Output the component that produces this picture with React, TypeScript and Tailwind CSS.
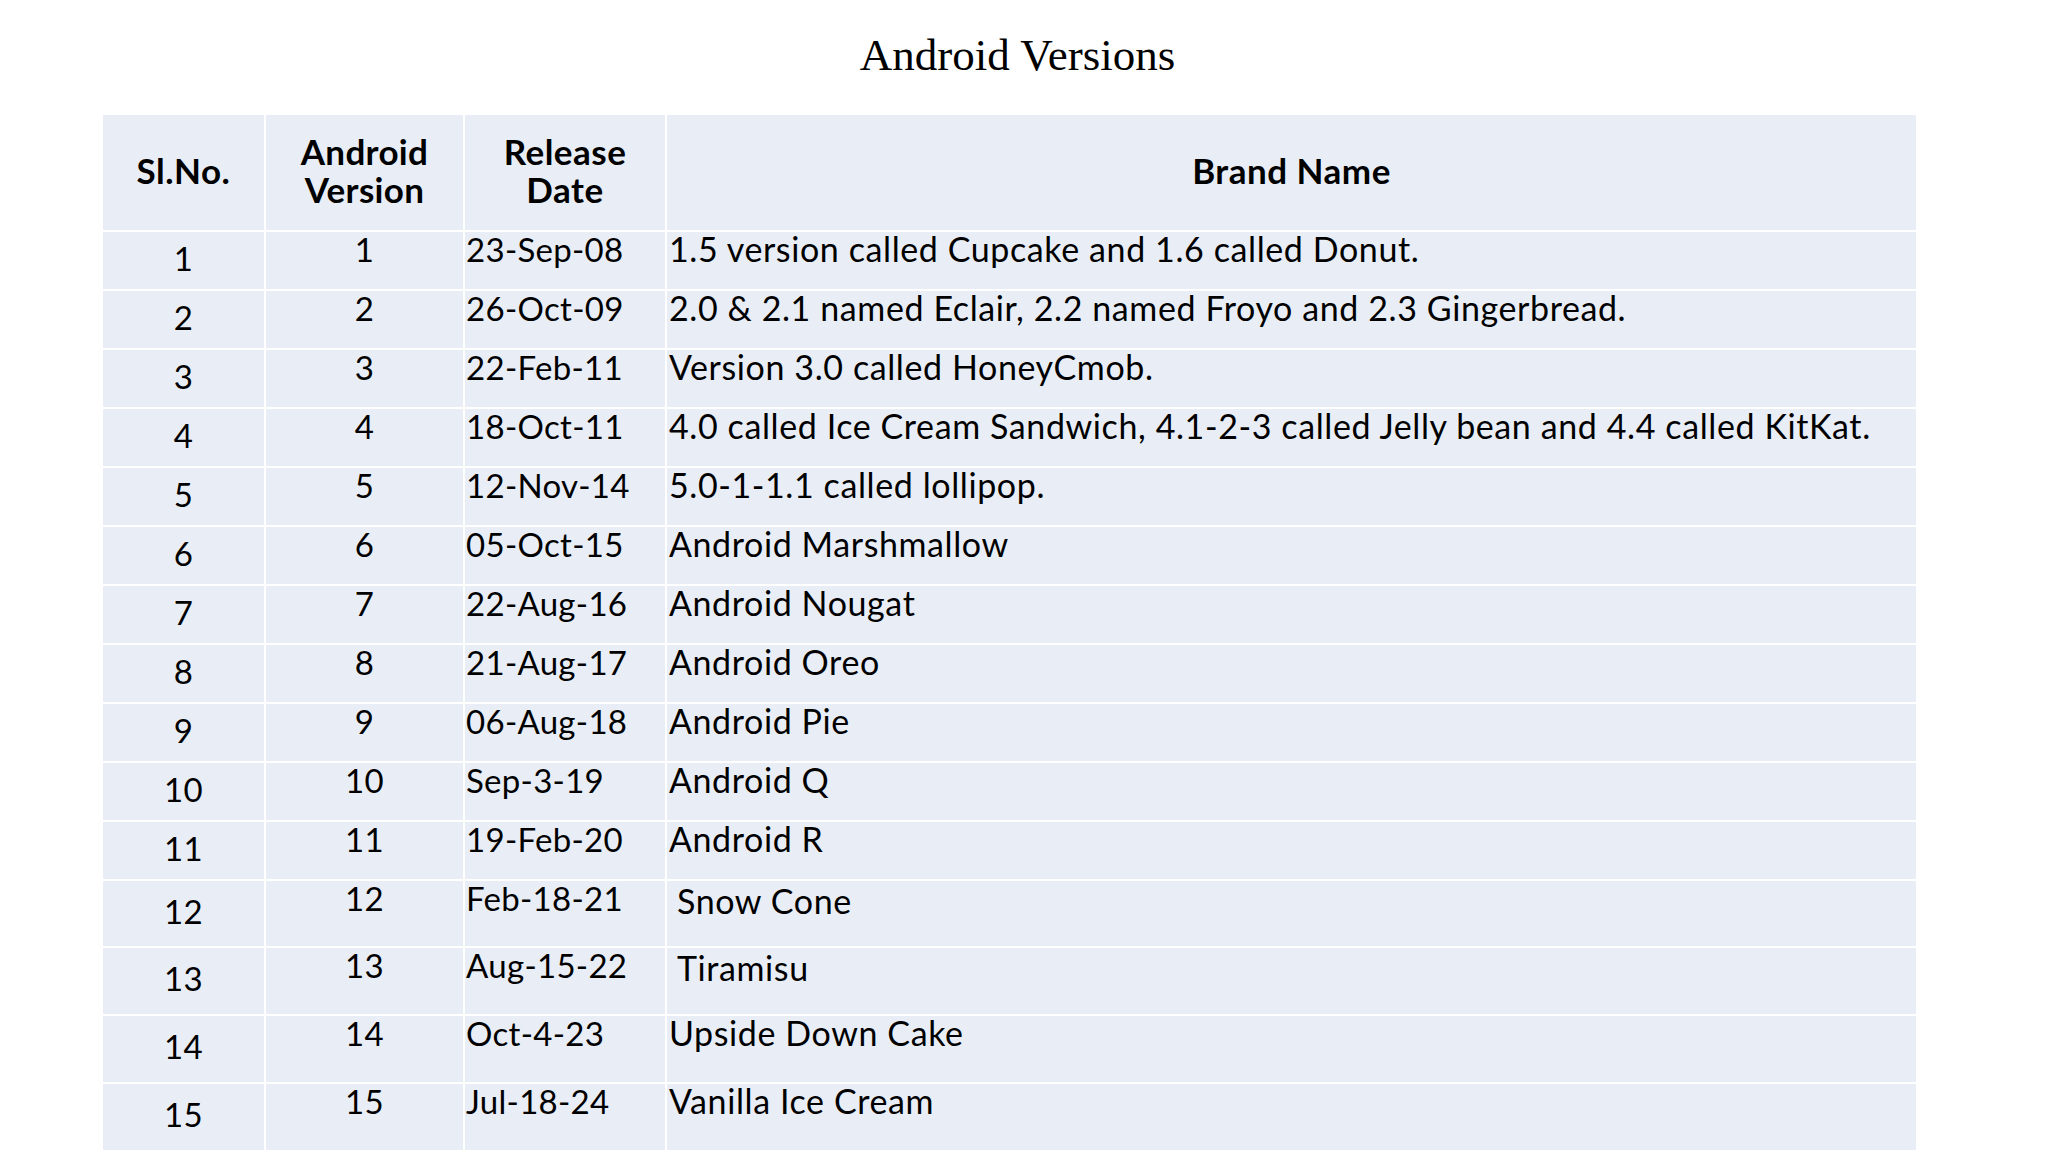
const rows = [
  { no: 1, ver: "1", date: "23-Sep-08", name: "1.5 version called Cupcake and 1.6 called Donut." },
  { no: 2, ver: "2", date: "26-Oct-09", name: "2.0 & 2.1 named Eclair, 2.2 named Froyo and 2.3 Gingerbread." },
  { no: 3, ver: "3", date: "22-Feb-11", name: "Version 3.0 called HoneyCmob." },
  { no: 4, ver: "4", date: "18-Oct-11", name: "4.0 called Ice Cream Sandwich, 4.1-2-3 called Jelly bean and 4.4 called KitKat." },
  { no: 5, ver: "5", date: "12-Nov-14", name: "5.0-1-1.1 called lollipop." },
  { no: 6, ver: "6", date: "05-Oct-15", name: "Android Marshmallow" },
  { no: 7, ver: "7", date: "22-Aug-16", name: "Android Nougat" },
  { no: 8, ver: "8", date: "21-Aug-17", name: "Android Oreo" },
  { no: 9, ver: "9", date: "06-Aug-18", name: "Android Pie" },
  { no: 10, ver: "10", date: "Sep-3-19", name: "Android Q" },
  { no: 11, ver: "11", date: "19-Feb-20", name: "Android R" },
  { no: 12, ver: "12", date: "Feb-18-21", name: "Snow Cone", indent: true },
  { no: 13, ver: "13", date: "Aug-15-22", name: "Tiramisu", indent: true },
  { no: 14, ver: "14", date: "Oct-4-23", name: "Upside Down Cake" },
  { no: 15, ver: "15", date: "Jul-18-24", name: "Vanilla Ice Cream" },
];

export default function App() {
  return (
    <div className="h-[1152px] w-[2048px] overflow-hidden bg-white text-black">
      {/* Title */}
      <div className="flex h-[115px] justify-center pt-[33px] pr-[13px]">
        <h1 className="text-[45px] leading-[44px] font-normal" style={{ fontFamily: '"Liberation Serif", "Times New Roman", serif' }}>
          Android Versions
        </h1>
      </div>

      {/* Table */}
      <div
        className="ml-[103px] grid w-[1813px] grid-cols-[161px_197px_200px_1249px] grid-rows-[115px_repeat(11,57px)_65px_repeat(3,66px)] gap-[2px] bg-white text-[33px] leading-[33px] tracking-[0.3px]"
        style={{ fontFamily: 'Lato, "Open Sans", sans-serif' }}
      >
        <div className="flex items-center justify-center bg-[#e9eef6] pb-[6px] text-[35px] font-bold leading-[38px] tracking-[0.5px]">Sl.No.</div>
        <div className="flex items-center justify-center bg-[#e9eef6] pb-[6px] text-center text-[35px] font-bold leading-[38px] tracking-[0.3px]">
          Android
          <br />
          Version
        </div>
        <div className="flex items-center justify-center bg-[#e9eef6] pb-[6px] text-center text-[35px] font-bold leading-[38px] tracking-[0.5px]">
          Release
          <br />
          Date
        </div>
        <div className="flex items-center justify-center bg-[#e9eef6] pb-[6px] text-[35px] font-bold leading-[38px] tracking-[0.5px]">Brand Name</div>

        {rows.map((r) => (
          <div key={r.no} className="contents">
            <div className="flex items-center justify-center bg-[#e9eef6] pb-[5px]">{r.no}</div>
            <div className="bg-[#e9eef6] pt-[1px] text-center">{r.ver}</div>
            <div className="whitespace-nowrap bg-[#e9eef6] pt-[1px] pl-[1px]">{r.date}</div>
            <div
              className={
                r.indent
                  ? "whitespace-nowrap bg-[#e9eef6] pt-[3px] pl-[10px] text-[34px] tracking-[0.6px]"
                  : "whitespace-nowrap bg-[#e9eef6] pl-[2px] text-[34px] tracking-[0.6px]"
              }
            >
              {r.name}
            </div>
          </div>
        ))}
      </div>
    </div>
  );
}
